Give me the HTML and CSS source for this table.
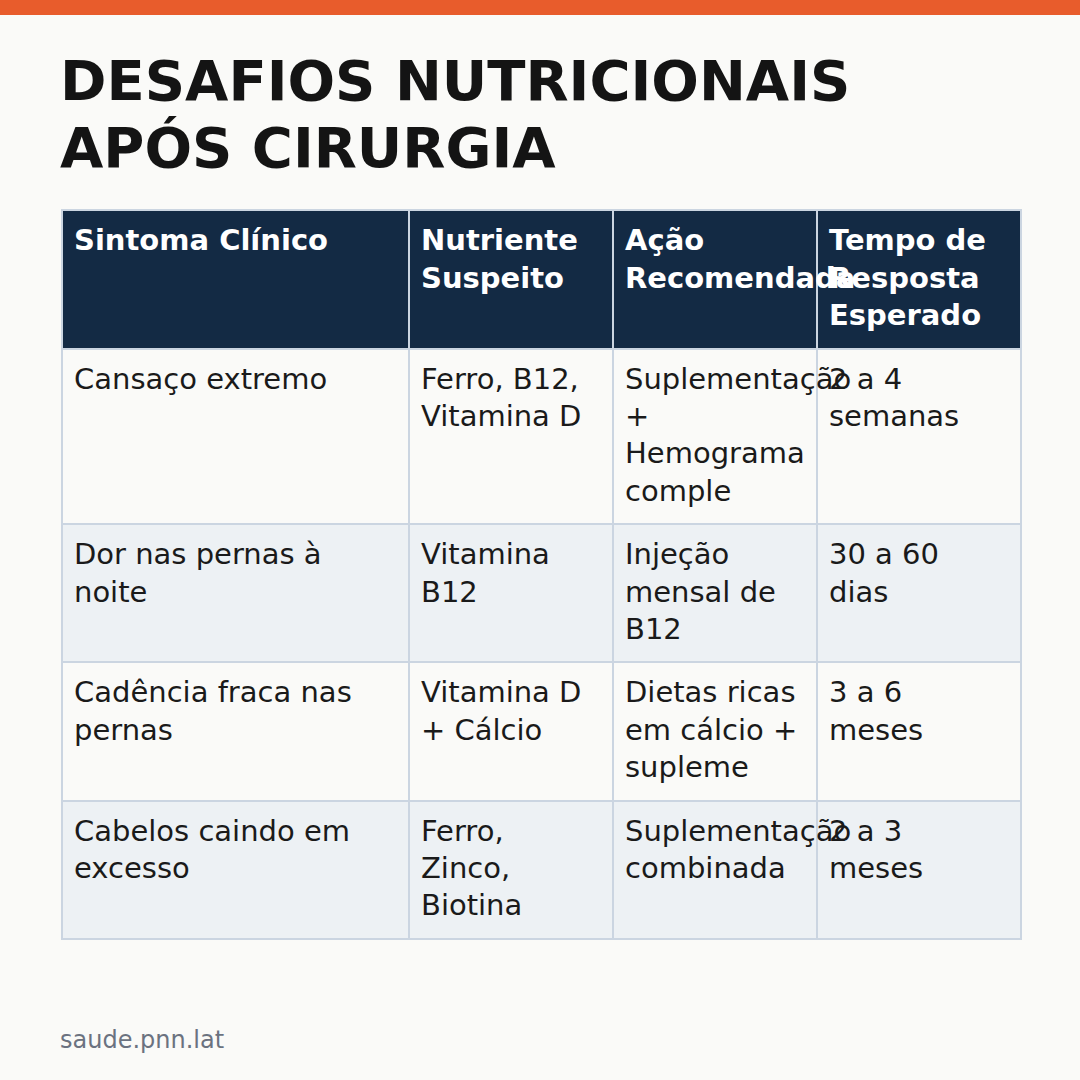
FILE: index.html
```html
<!DOCTYPE html>
<html lang="pt">
<head>
<meta charset="utf-8">
<title>Desafios Nutricionais Após Cirurgia</title>
<link rel="stylesheet" href="styles.css">
</head>
<body>
<div class="page">
  <div class="topbar"></div>
  <div class="content">
    <h1 class="title">DESAFIOS NUTRICIONAIS<br>APÓS CIRURGIA</h1>
    <table class="grid">
      <colgroup>
        <col class="c1"><col class="c2"><col class="c3"><col class="c4">
      </colgroup>
      <thead>
        <tr>
          <th>Sintoma Clínico</th>
          <th>Nutriente Suspeito</th>
          <th>Ação Recomendada</th>
          <th>Tempo de Resposta Esperado</th>
        </tr>
      </thead>
      <tbody>
        <tr>
          <td>Cansaço extremo</td>
          <td>Ferro, B12, Vitamina D</td>
          <td>Suplementação + Hemograma comple</td>
          <td>2 a 4 semanas</td>
        </tr>
        <tr class="alt">
          <td>Dor nas pernas à noite</td>
          <td>Vitamina B12</td>
          <td>Injeção mensal de B12</td>
          <td>30 a 60 dias</td>
        </tr>
        <tr>
          <td>Cadência fraca nas pernas</td>
          <td>Vitamina D + Cálcio</td>
          <td>Dietas ricas em cálcio + supleme</td>
          <td>3 a 6 meses</td>
        </tr>
        <tr class="alt">
          <td>Cabelos caindo em excesso</td>
          <td>Ferro, Zinco, Biotina</td>
          <td>Suplementação combinada</td>
          <td>2 a 3 meses</td>
        </tr>
      </tbody>
    </table>
    <div class="footer">saude.pnn.lat</div>
  </div>
</div>
</body>
</html>
```

FILE: styles.css
```css
html, body {
  margin: 0;
  padding: 0;
}
body {
  background: #FAFAF8;
  font-family: "DejaVu Sans", "Noto Sans", sans-serif;
  color: #1A1A1A;
}
.page {
  width: 1080px;
  height: 1080px;
  display: flex;
  flex-direction: column;
  overflow: hidden;
}
.topbar {
  height: 15px;
  background: #E85C2C;
  flex: none;
}
.content {
  flex: 1;
  display: flex;
  flex-direction: column;
  padding: 0 60px;
}
.title {
  margin: 32px 0 0;
  font-size: 56px;
  line-height: 1.2;
  font-weight: 700;
  color: #141414;
}
.grid {
  margin-top: 28px;
  margin-left: 1px;
  width: 960px;
  border-collapse: collapse;
  table-layout: fixed;
}
.c1 { width: 347px; }
.c2, .c3, .c4 { width: 204px; }
.grid th,
.grid td {
  padding: 11px 16px 13px 11px;
  border: 2px solid #CBD5E1;
  vertical-align: top;
  text-align: left;
  font-size: 29px;
  line-height: 37.4px;
}
.grid th {
  background: #132A44;
  color: #FFFFFF;
  font-weight: 700;
}
.grid td {
  background: #FAFAF8;
  font-weight: 400;
}
.grid tr.alt td {
  background: #EDF1F4;
}
.footer {
  margin-top: auto;
  padding-bottom: 25px;
  font-size: 24px;
  line-height: 1.2;
  color: #6B7280;
}
```
